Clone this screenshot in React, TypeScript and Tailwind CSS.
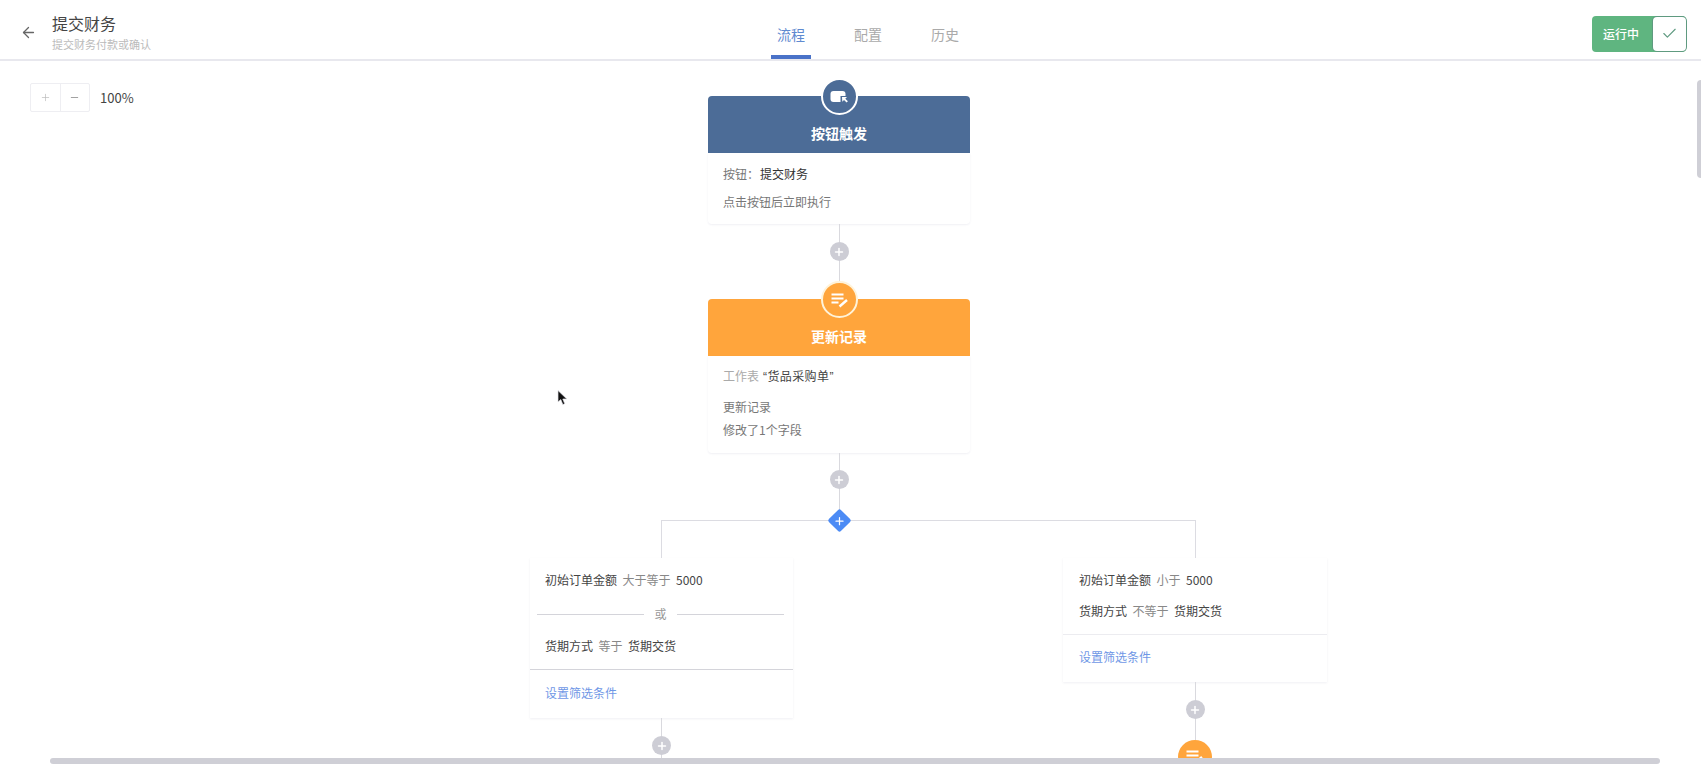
import { ArrowLeft, Check, Minus, Plus } from 'lucide-react';
import type { ReactNode } from 'react';

const font = { fontFamily: '"Noto Sans CJK SC", "Noto Sans", sans-serif' };

const tabs = [
  { label: '流程', active: true },
  { label: '配置', active: false },
  { label: '历史', active: false },
];

const AddButton = () => (
  <span className="flex h-[19px] w-[19px] items-center justify-center rounded-full bg-[#cdcdd5] text-white">
    <Plus size={12} strokeWidth={3} />
  </span>
);

// vertical line with the grey add button on it
const Connector = ({ height, top }: { height: number; top: number }) => (
  <div className="relative flex w-full justify-center" style={{ height }}>
    <div className="h-full w-px bg-[#d9d9de]" />
    <div className="absolute" style={{ top }}>
      <AddButton />
    </div>
  </div>
);

const ButtonIcon = () => (
  <svg width="22" height="18" viewBox="0 0 22 18" fill="none">
    <rect x="1.5" y="3" width="15" height="11" rx="3" fill="#fff" />
    <path d="M11.5 8h8v8h-8z" fill="#4c6c97" />
    <path d="M13 9h5l-1.7 1.7 2.6 2.6-1.3 1.3-2.6-2.6L13.3 13.7z" fill="#fff" />
  </svg>
);

const UpdateIcon = () => (
  <svg width="20" height="18" viewBox="0 0 20 18" fill="none" stroke="#fff" strokeWidth="1.8">
    <path d="M1.5 3.5h12M1.5 7.5h12M1.5 11.5h7" />
    <path d="M9.5 15.5l7.5-6.5" strokeWidth="2.4" />
  </svg>
);

const NodeCard = ({
  title,
  color,
  ring,
  icon,
  children,
  bodyClass,
}: {
  title: string;
  color: string;
  ring: string;
  icon: ReactNode;
  children: ReactNode;
  bodyClass: string;
}) => (
  <div className="relative w-[262px]">
    <div
      className={`absolute -top-[18px] left-[113px] z-10 flex h-[37px] w-[37px] items-center justify-center rounded-full border-2 ${ring} ${color}`}
    >
      {icon}
    </div>
    <div
      className={`flex h-[57px] items-end justify-center rounded-t-[4px] pb-[9px] text-[14px] font-bold text-white ${color}`}
    >
      {title}
    </div>
    <div
      className={`rounded-b-[4px] bg-white pr-4 pl-[15px] text-[12px] text-[#777] shadow-[0_1px_2px_rgba(60,60,110,0.08)] ${bodyClass}`}
    >
      {children}
    </div>
  </div>
);

const Branch = ({
  padding,
  children,
  dividerClass,
  linkClass,
}: {
  padding: string;
  children: ReactNode;
  dividerClass: string;
  linkClass: string;
}) => (
  <div className="w-full bg-white text-[12px] shadow-[0_1px_2px_rgba(60,60,110,0.08)]">
    {children}
    <div className={`border-t ${dividerClass}`} />
    <div className={`text-[#6f97e6] ${padding} ${linkClass}`}>设置筛选条件</div>
  </div>
);

const Cond = ({ a, op, b, className }: { a: string; op: string; b: string; className: string }) => (
  <div className={`flex gap-[5.5px] leading-[18px] text-[#444] ${className}`}>
    <span>{a}</span>
    <span className="text-[#888]">{op}</span>
    <span>{b}</span>
  </div>
);

const App = () => {
  return (
    <div className="relative h-screen overflow-hidden bg-white" style={font}>
      {/* Header */}
      <header className="relative z-20 flex h-[61px] items-center justify-between border-b-2 border-[#e8e8ee] bg-white pr-[15px] pl-5">
        <div className="flex w-[500px] items-center gap-[15px]">
          <ArrowLeft size={17} className="mt-[6px] text-[#666]" strokeWidth={1.8} />
          <div className="mt-[5px]">
            <div className="text-[16px] leading-[22px] text-[#444]">提交财务</div>
            <div className="mt-[2px] text-[11px] leading-[16px] text-[#bbb]">提交财务付款或确认</div>
          </div>
        </div>
        <nav className="ml-[30px] flex h-full items-stretch gap-[37px]">
          {tabs.map((tab) => (
            <div
              key={tab.label}
              className={`flex w-10 items-center justify-center border-b-[4px] pt-[13px] text-[14px] ${
                tab.active ? 'border-[#4a72c8] text-[#5f8ad0]' : 'border-transparent text-[#aaa]'
              }`}
            >
              {tab.label}
            </div>
          ))}
        </nav>
        <div className="mt-2 flex w-[500px] justify-end">
          <div className="flex h-9 w-[94px] items-center rounded-[4px] bg-[#5fb580] pl-[11px] text-[12px] font-medium text-white">
            <span className="flex-1">运行中</span>
            <span className="flex h-[34px] w-[33px] items-center justify-center rounded-[4px] bg-white text-[#5f9a80] shadow-[0_0_0_1px_#5f9a80]">
              <Check size={17} strokeWidth={1.6} />
            </span>
          </div>
        </div>
      </header>

      {/* Canvas */}
      <main className="pt-[35px]">
        <div className="absolute top-[83px] left-[30px] z-10 flex items-center">
          <div className="flex h-[29px] w-[60px] rounded-[2px] border border-[#eeeef2]">
            <span className="flex flex-1 items-center justify-center border-r border-[#eeeef2] text-[#bbb]">
              <Plus size={11} strokeWidth={1.5} />
            </span>
            <span className="flex flex-1 items-center justify-center text-[#777]">
              <Minus size={11} strokeWidth={1.5} />
            </span>
          </div>
          <span className="ml-[10px] text-[13px] text-[#444]">100%</span>
        </div>

        <div className="ml-[708px] flex w-[262px] flex-col items-center">
          <NodeCard
            title="按钮触发"
            color="bg-[#4c6c97]"
            ring="border-white"
            icon={<ButtonIcon />}
            bodyClass="h-[71px] pt-[12px]"
          >
            <div className="flex leading-[18px]">
              <span>按钮：</span>
              <span className="ml-px text-[#333]">提交财务</span>
            </div>
            <div className="mt-[10px] leading-[18px]">点击按钮后立即执行</div>
          </NodeCard>
          <Connector height={75} top={18} />
          <NodeCard
            title="更新记录"
            color="bg-[#ffa53c]"
            ring="border-[#fff3d9]"
            icon={<UpdateIcon />}
            bodyClass="h-[97px] pt-[11px]"
          >
            <div className="flex gap-[4px] leading-[18px]">
              <span className="text-[#aaa]">工作表</span>
              <span className="mt-px font-['Liberation_Sans','Noto_Sans_CJK_SC',sans-serif] tracking-[0.4px] text-[#444]">“货品采购单”</span>
            </div>
            <div className="mt-[12px] leading-[18px]">更新记录</div>
            <div className="mt-[5px] leading-[18px]">修改了1个字段</div>
          </NodeCard>
          <Connector height={67} top={17} />
        </div>

        {/* Branch lines, blue diamond on top */}
        <div className="relative ml-[661px] h-[38px] w-[535px] border-x border-t border-[#dcdce2]">
          <div className="absolute -top-[9px] left-[169px] flex h-[17px] w-[17px] rotate-45 items-center justify-center rounded-[2px] bg-[#4c8bf5] text-white">
            <Plus size={12} strokeWidth={2.5} className="-rotate-45" />
          </div>
        </div>

        <div className="ml-[530px] flex items-start gap-[270px]">
          <div className="flex w-[263px] flex-col items-center">
            <Branch
              padding="pl-[15px]"
              dividerClass="border-[#d4d4da]"
              linkClass="h-[48px] pt-[14px] leading-[18px]"
            >
              <Cond className="pt-[13px] pl-[15px]" a="初始订单金额" op="大于等于" b="5000" />
              <div className="mt-[16px] flex items-center pr-[9px] pl-[7px] text-[#999]">
                <div className="h-px flex-1 bg-[#d4d4da]" />
                <span className="w-[33px] text-center leading-[18px]">或</span>
                <div className="h-px flex-1 bg-[#d4d4da]" />
              </div>
              <Cond className="mt-[14px] mb-[14px] pl-[15px]" a="货期方式" op="等于" b="货期交货" />
            </Branch>
            <Connector height={60} top={18} />
          </div>

          <div className="flex w-[264px] flex-col items-center">
            <Branch
              padding="pl-[16px]"
              dividerClass="border-[#ececf0]"
              linkClass="h-[47px] pt-[13px] leading-[18px]"
            >
              <Cond className="pt-[13px] pl-[16px]" a="初始订单金额" op="小于" b="5000" />
              <Cond className="mt-[13px] mb-[14px] pl-[16px]" a="货期方式" op="不等于" b="货期交货" />
            </Branch>
            <Connector height={58} top={18} />
            <div className="flex h-[34px] w-[34px] shrink-0 items-center justify-center rounded-full bg-[#ffa53c]">
              <UpdateIcon />
            </div>
          </div>
        </div>
      </main>

      {/* Mouse pointer caught in the screenshot */}
      <svg className="absolute top-[390px] left-[557px] z-40" width="11" height="16" viewBox="0 0 11 16">
        <path d="M1 0.5V12L3.8 9.6 5.8 14.6 7.8 13.8 5.8 9H9.8z" fill="#111" stroke="#e4e4ea" strokeWidth="0.7" />
      </svg>

      {/* Scrollbars */}
      <div className="absolute top-[80px] right-0 z-30 h-[98px] w-1 rounded-l-sm bg-[#cfcfd6]" />
      <div className="absolute right-0 bottom-0 left-0 z-30 h-[10px] bg-white">
        <div className="ml-[50px] h-[6px] w-[1610px] rounded-full bg-[#cfcfd6]" />
      </div>
    </div>
  );
};

export default App;
